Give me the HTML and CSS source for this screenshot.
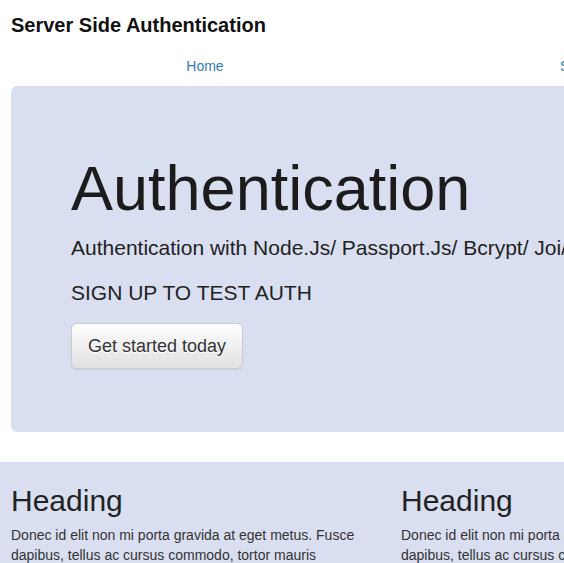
FILE: index.html
```html
<!DOCTYPE html>
<html lang="en">
<head>
<meta charset="utf-8">
<title>Server Side Authentication</title>
<link rel="stylesheet" href="styles.css">
</head>
<body>
<div class="container">
  <div class="masthead">
    <h3 class="brand">Server Side Authentication</h3>
    <nav>
      <ul class="nav">
        <li><a href="#">Home</a></li>
        <li><a href="#">Sign Up</a></li>
        <li><a href="#">Login</a></li>
      </ul>
    </nav>
  </div>
  <div class="jumbotron">
    <h1>Authentication</h1>
    <p>Authentication with Node.Js/ Passport.Js/ Bcrypt/ Joi/ MongoDB</p>
    <p>SIGN UP TO TEST AUTH</p>
    <p><a class="btn" href="#">Get started today</a></p>
  </div>
</div>
<div class="features">
  <div class="container">
    <div class="row">
      <div class="col">
        <h2>Heading</h2>
        <p>Donec id elit non mi porta gravida at eget metus. Fusce dapibus, tellus ac cursus commodo, tortor mauris condimentum nibh, ut fermentum massa justo sit amet risus.</p>
      </div>
      <div class="col">
        <h2>Heading</h2>
        <p>Donec id elit non mi porta gravida at eget metus. Fusce dapibus, tellus ac cursus commodo, tortor mauris condimentum nibh, ut fermentum massa justo sit amet risus.</p>
      </div>
      <div class="col">
        <h2>Heading</h2>
        <p>Donec sed odio dui. Cras justo odio, dapibus ac facilisis in, egestas eget quam. Vestibulum id ligula porta felis euismod semper.</p>
      </div>
    </div>
  </div>
</div>
</body>
</html>
```
FILE: styles.css
```css
html, body {
  overflow: hidden;
}
body {
  margin: 0;
  font-family: "Liberation Sans", Arial, sans-serif;
  font-size: 14px;
  line-height: 20px;
  color: #333;
  background: #fff;
}
.container {
  width: 1170px;
  box-sizing: border-box;
  padding: 0 15px 0 11px;
}
.brand {
  margin: 14px 0 10px;
  font-size: 20px;
  line-height: 22px;
  font-weight: bold;
  color: #111;
}
.nav {
  list-style: none;
  margin: 0;
  padding: 0 0 0 4px;
  display: flex;
}
.nav li {
  flex: 1 1 0;
  text-align: center;
}
.nav a {
  display: block;
  padding: 10px 15px;
  color: #337ab7;
  text-decoration: none;
}
.jumbotron {
  background: #d9dff0;
  border-radius: 6px;
  padding: 48px 60px;
  margin-bottom: 30px;
  color: #222;
}
.jumbotron h1 {
  margin: 20px 0 10px;
  font-size: 63px;
  line-height: 1.1;
  font-weight: normal;
  color: #1c1c1c;
}
.jumbotron p {
  margin: 0 0 15px;
  font-size: 21px;
  line-height: 30px;
}
.btn {
  display: inline-block;
  box-sizing: border-box;
  height: 46px;
  padding: 10px 16px;
  font-size: 18px;
  line-height: 24px;
  color: #333;
  text-decoration: none;
  border: 1px solid #ccc;
  border-radius: 6px;
  background: linear-gradient(to bottom, #fff 0%, #e0e0e0 100%);
  text-shadow: 0 1px 0 #fff;
  box-shadow: inset 0 1px 0 rgba(255,255,255,.15), 0 1px 1px rgba(0,0,0,.075);
}
.features {
  background: #d9dff0;
  padding-top: 2px;
}
.row {
  display: flex;
  margin: 0 -15px;
}
.col {
  width: 390px;
  box-sizing: border-box;
  padding: 0 15px;
}
.col h2 {
  margin: 20px 0 8px;
  font-size: 30px;
  line-height: 33px;
  font-weight: normal;
  color: #222;
}
.col p {
  margin: 0 0 10px;
}
```
